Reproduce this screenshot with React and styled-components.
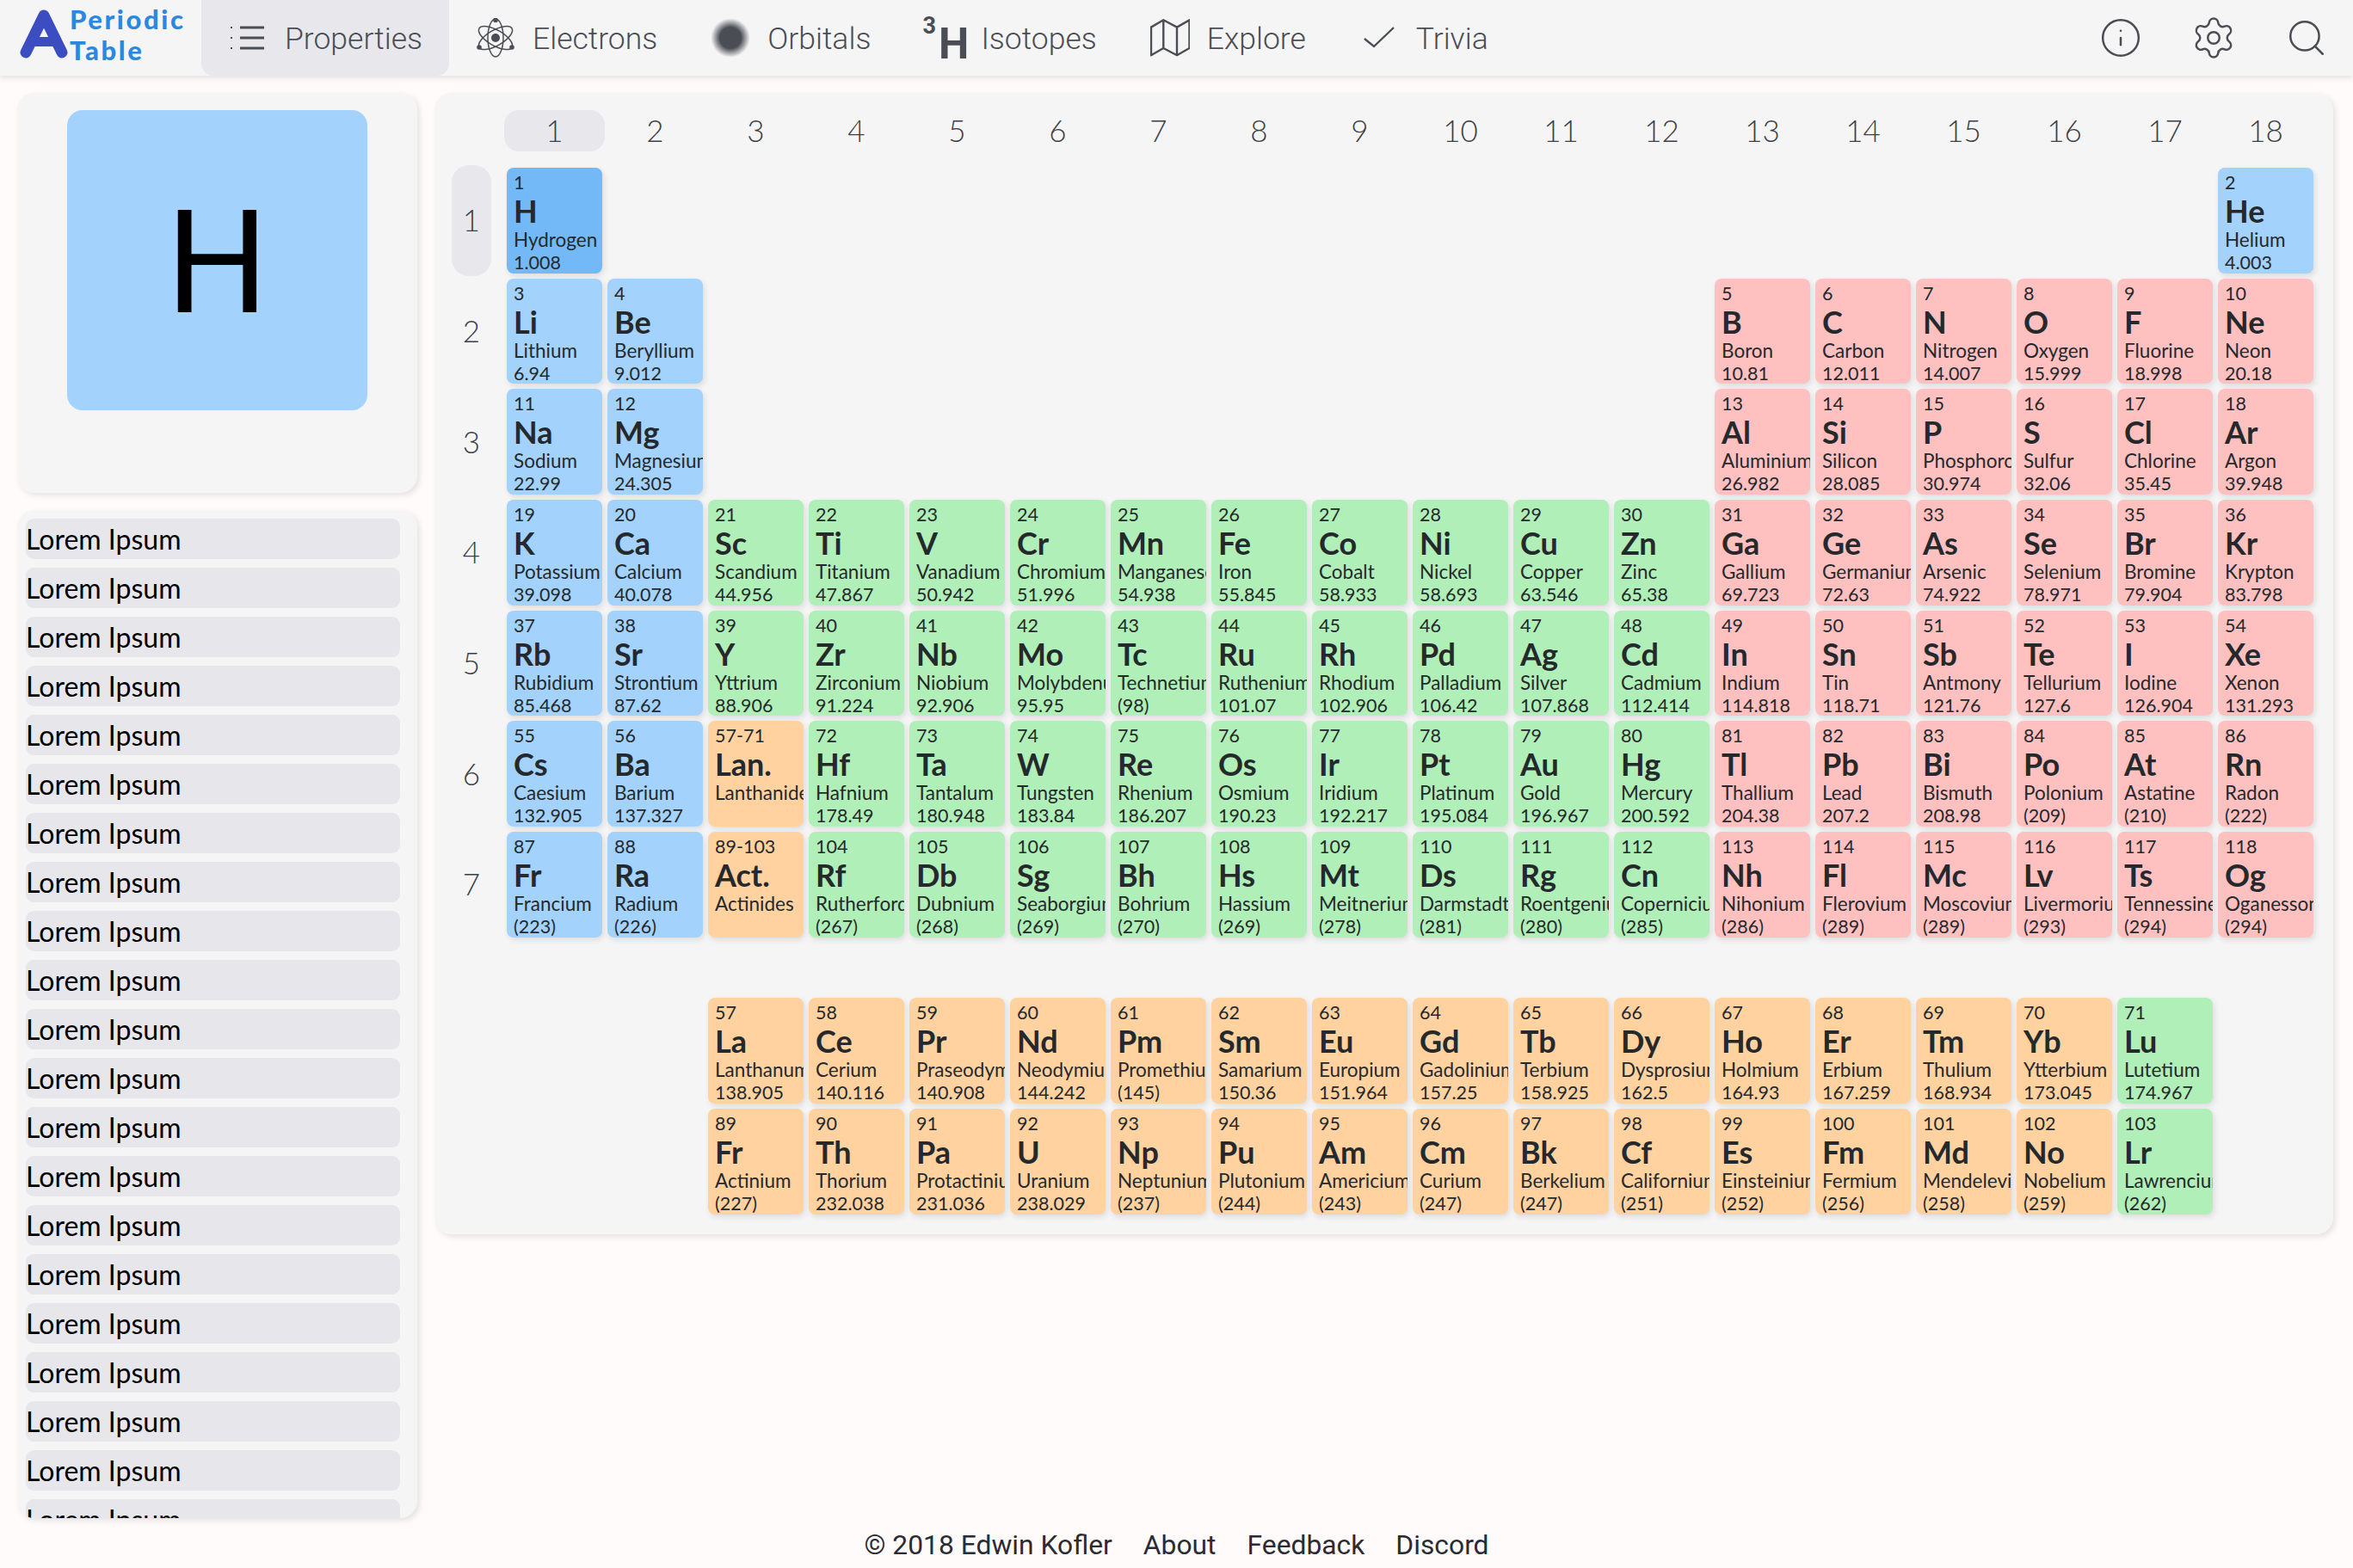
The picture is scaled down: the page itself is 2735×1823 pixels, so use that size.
import React from "react";
import styled, { createGlobalStyle } from "styled-components";
import { Info, Settings, Search } from "lucide-react";

const GlobalStyle = createGlobalStyle`
  html, body {
    margin: 0;
    padding: 0;
    background: #fffbfa;
    font-family: "Lato", "Liberation Sans", sans-serif;
  }
`;

const Page = styled.div`
  width: 2735px;
  height: 1823px;
  overflow: hidden;
  display: flex;
  flex-direction: column;
`;

/* nav */
const Nav = styled.header`
  height: 88px;
  flex: none;
  display: flex;
  align-items: stretch;
  background: #f6f5f6;
  box-shadow: 0 3px 6px rgba(60, 60, 90, 0.12);
  color: #4a4e54;
`;
const Logo = styled.div`
  width: 234px;
  flex: none;
  display: flex;
  align-items: flex-start;
  padding: 11px 0 0 23px;
  box-sizing: border-box;
  gap: 2px;
`;
const LogoText = styled.div`
  font-weight: 900;
  font-size: 31px;
  line-height: 36px;
  letter-spacing: 2.6px;
  color: #2a88e2;
  margin-top: -7px;
`;
const Tab = styled.div`
  display: flex;
  align-items: center;
  gap: 20px;
  padding: 2px 31px 0;
  font-family: "Roboto", sans-serif;
  font-weight: 300;
  font-size: 35.5px;
  border-radius: 0 0 14px 14px;
  background: ${(p) => (p.$active ? "#e8e8ec" : "transparent")};
`;
const IconBox = styled.svg`
  width: 46px;
  height: 46px;
  flex: none;
  margin-top: -2px;
  fill: none;
  stroke: #4a4e54;
  stroke-width: 2.4;
`;
const Blob = styled.div`
  width: 46px;
  height: 46px;
  flex: none;
  margin-top: -2px;
  border-radius: 50%;
  background: radial-gradient(circle, #4a4e54 38%, rgba(74, 78, 84, 0) 70%);
`;
const IsoIcon = styled.div`
  width: 46px;
  height: 46px;
  flex: none;
  display: flex;
  font-family: "Roboto", sans-serif;
  font-weight: 700;
  font-size: 50px;
  line-height: 58px;
  white-space: nowrap;
  margin-left: -2px;
  margin-right: 2px;
`;
const IsoMass = styled.span`
  font-size: 27px;
  line-height: 30px;
  margin-top: -7px;
  margin-right: 3px;
`;
const NavRight = styled.div`
  margin-left: auto;
  display: flex;
`;
const NavButton = styled.div`
  width: 108px;
  display: flex;
  align-items: center;
  justify-content: center;
`;

/* body */
const Main = styled.main`
  height: 1677px;
  flex: none;
  display: flex;
  align-items: flex-start;
  gap: 20px;
  padding: 20px 0 0 20px;
  box-sizing: border-box;
`;
const Sidebar = styled.aside`
  width: 465px;
  height: 100%;
  display: flex;
  flex-direction: column;
  gap: 20px;
`;
const Panel = styled.section`
  background: #f6f5f6;
  border-radius: 20px;
  box-shadow: 3px 3px 6px rgba(60, 60, 70, 0.12);
`;
const PreviewPanel = styled(Panel)`
  height: 465px;
  flex: none;
  padding: 20px 0 0 58px;
  box-sizing: border-box;
`;
const Preview = styled.div`
  width: 349px;
  height: 349px;
  border-radius: 18px;
  background: #a3d2fc;
  display: flex;
  align-items: center;
  justify-content: center;
  font-family: "Roboto", sans-serif;
  font-size: 167px;
  line-height: 1;
  color: #000;
  padding-top: 7px;
  box-sizing: border-box;
`;
const ListPanel = styled(Panel)`
  flex: 1;
  min-height: 0;
  overflow: hidden;
  padding: 10px 20px 0 10px;
`;
const ListItem = styled.div`
  height: 47px;
  margin-bottom: 10px;
  border-radius: 9px;
  background: #e7e7eb;
  color: #000;
  font-size: 32px;
  line-height: 47px;
`;

/* table */
const TablePanel = styled(Panel)`
  width: 2207px;
  padding: 20px;
  box-sizing: border-box;
`;
const Grid = styled.div`
  display: grid;
  grid-template-columns: 61px repeat(18, 117px);
  grid-template-rows: 64px repeat(7, 128.67px) 64px repeat(2, 129px);
`;
const GroupLabel = styled.div`
  grid-row: 1;
  grid-column: ${(p) => p.$col + 1};
  height: 48px;
  padding-bottom: 2px;
  box-sizing: border-box;
  border-radius: 17px;
  display: flex;
  align-items: center;
  justify-content: center;
  font-weight: 300;
  font-size: 35px;
  color: #3c4046;
  background: ${(p) => (p.$active ? "#e8e8ec" : "transparent")};
`;
const PeriodLabel = styled.div`
  grid-column: 1;
  grid-row: ${(p) => p.$row + 1};
  width: 46px;
  padding-bottom: 2px;
  box-sizing: border-box;
  border-radius: 20px;
  display: flex;
  align-items: center;
  justify-content: center;
  font-weight: 300;
  font-size: 35px;
  color: #3c4046;
  background: ${(p) => (p.$active ? "#e8e8ec" : "transparent")};
`;

const COLORS = {
  blue: "#a3d2fc",
  selected: "#73b9f8",
  pink: "#ffc0c0",
  green: "#b0efb7",
  orange: "#ffd2a0",
};

const Cell = styled.div`
  grid-column: ${(p) => p.$col + 1};
  grid-row: ${(p) => p.$row + 1};
  margin: 3px;
  padding: 4px 0 0 8px;
  box-sizing: border-box;
  min-width: 0;
  overflow: hidden;
  white-space: nowrap;
  border-radius: 8px;
  color: #25292c;
  background: ${(p) => COLORS[p.$kind]};
  box-shadow: 2px 3px 6px rgba(40, 40, 50, 0.12);
`;
const CellNumber = styled.div`
  font-size: 21.5px;
  line-height: 26px;
`;
const CellSymbol = styled.div`
  font-size: 36px;
  font-weight: 700;
  line-height: 40px;
`;
const CellName = styled.div`
  font-size: 22.5px;
  line-height: 28px;
`;
const CellMass = styled.div`
  font-size: 21.5px;
  line-height: 24px;
`;

/* footer */
const Footer = styled.footer`
  flex: 1;
  display: flex;
  align-items: center;
  justify-content: center;
  gap: 36px;
  font-family: "Roboto", sans-serif;
  font-size: 31.8px;
  color: #2b2b33;
  padding-top: 4px;
`;

const rows = [
  [1, "1|H|Hydrogen|1.008", [18, "2|He|Helium|4.003"]],
  [
    2,
    "3|Li|Lithium|6.94",
    "4|Be|Beryllium|9.012",
    [13, "5|B|Boron|10.81"],
    "6|C|Carbon|12.011",
    "7|N|Nitrogen|14.007",
    "8|O|Oxygen|15.999",
    "9|F|Fluorine|18.998",
    "10|Ne|Neon|20.18",
  ],
  [
    3,
    "11|Na|Sodium|22.99",
    "12|Mg|Magnesium|24.305",
    [13, "13|Al|Aluminium|26.982"],
    "14|Si|Silicon|28.085",
    "15|P|Phosphorous|30.974",
    "16|S|Sulfur|32.06",
    "17|Cl|Chlorine|35.45",
    "18|Ar|Argon|39.948",
  ],
  [
    4,
    "19|K|Potassium|39.098",
    "20|Ca|Calcium|40.078",
    "21|Sc|Scandium|44.956",
    "22|Ti|Titanium|47.867",
    "23|V|Vanadium|50.942",
    "24|Cr|Chromium|51.996",
    "25|Mn|Manganese|54.938",
    "26|Fe|Iron|55.845",
    "27|Co|Cobalt|58.933",
    "28|Ni|Nickel|58.693",
    "29|Cu|Copper|63.546",
    "30|Zn|Zinc|65.38",
    "31|Ga|Gallium|69.723",
    "32|Ge|Germanium|72.63",
    "33|As|Arsenic|74.922",
    "34|Se|Selenium|78.971",
    "35|Br|Bromine|79.904",
    "36|Kr|Krypton|83.798",
  ],
  [
    5,
    "37|Rb|Rubidium|85.468",
    "38|Sr|Strontium|87.62",
    "39|Y|Yttrium|88.906",
    "40|Zr|Zirconium|91.224",
    "41|Nb|Niobium|92.906",
    "42|Mo|Molybdenum|95.95",
    "43|Tc|Technetium|(98)",
    "44|Ru|Ruthenium|101.07",
    "45|Rh|Rhodium|102.906",
    "46|Pd|Palladium|106.42",
    "47|Ag|Silver|107.868",
    "48|Cd|Cadmium|112.414",
    "49|In|Indium|114.818",
    "50|Sn|Tin|118.71",
    "51|Sb|Antmony|121.76",
    "52|Te|Tellurium|127.6",
    "53|I|Iodine|126.904",
    "54|Xe|Xenon|131.293",
  ],
  [
    6,
    "55|Cs|Caesium|132.905",
    "56|Ba|Barium|137.327",
    "57-71|Lan.|Lanthanides|",
    "72|Hf|Hafnium|178.49",
    "73|Ta|Tantalum|180.948",
    "74|W|Tungsten|183.84",
    "75|Re|Rhenium|186.207",
    "76|Os|Osmium|190.23",
    "77|Ir|Iridium|192.217",
    "78|Pt|Platinum|195.084",
    "79|Au|Gold|196.967",
    "80|Hg|Mercury|200.592",
    "81|Tl|Thallium|204.38",
    "82|Pb|Lead|207.2",
    "83|Bi|Bismuth|208.98",
    "84|Po|Polonium|(209)",
    "85|At|Astatine|(210)",
    "86|Rn|Radon|(222)",
  ],
  [
    7,
    "87|Fr|Francium|(223)",
    "88|Ra|Radium|(226)",
    "89-103|Act.|Actinides|",
    "104|Rf|Rutherfordium|(267)",
    "105|Db|Dubnium|(268)",
    "106|Sg|Seaborgium|(269)",
    "107|Bh|Bohrium|(270)",
    "108|Hs|Hassium|(269)",
    "109|Mt|Meitnerium|(278)",
    "110|Ds|Darmstadtium|(281)",
    "111|Rg|Roentgenium|(280)",
    "112|Cn|Copernicium|(285)",
    "113|Nh|Nihonium|(286)",
    "114|Fl|Flerovium|(289)",
    "115|Mc|Moscovium|(289)",
    "116|Lv|Livermorium|(293)",
    "117|Ts|Tennessine|(294)",
    "118|Og|Oganesson|(294)",
  ],
  [
    9,
    [3, "57|La|Lanthanum|138.905"],
    "58|Ce|Cerium|140.116",
    "59|Pr|Praseodymium|140.908",
    "60|Nd|Neodymium|144.242",
    "61|Pm|Promethium|(145)",
    "62|Sm|Samarium|150.36",
    "63|Eu|Europium|151.964",
    "64|Gd|Gadolinium|157.25",
    "65|Tb|Terbium|158.925",
    "66|Dy|Dysprosium|162.5",
    "67|Ho|Holmium|164.93",
    "68|Er|Erbium|167.259",
    "69|Tm|Thulium|168.934",
    "70|Yb|Ytterbium|173.045",
    "71|Lu|Lutetium|174.967",
  ],
  [
    10,
    [3, "89|Fr|Actinium|(227)"],
    "90|Th|Thorium|232.038",
    "91|Pa|Protactinium|231.036",
    "92|U|Uranium|238.029",
    "93|Np|Neptunium|(237)",
    "94|Pu|Plutonium|(244)",
    "95|Am|Americium|(243)",
    "96|Cm|Curium|(247)",
    "97|Bk|Berkelium|(247)",
    "98|Cf|Californium|(251)",
    "99|Es|Einsteinium|(252)",
    "100|Fm|Fermium|(256)",
    "101|Md|Mendelevium|(258)",
    "102|No|Nobelium|(259)",
    "103|Lr|Lawrencium|(262)",
  ],
];

function kindOf(num, row, col) {
  if (num === "1") return "selected";
  if (num === "2") return "blue";
  if (row >= 9) return col === 17 ? "green" : "orange";
  if (num.includes("-")) return "orange";
  if (col <= 2) return "blue";
  return col <= 12 ? "green" : "pink";
}

const elements = rows.flatMap(([row, ...items]) => {
  let col = 0;
  return items.map((item) => {
    let text = item;
    if (Array.isArray(item)) {
      col = item[0];
      text = item[1];
    } else {
      col += 1;
    }
    const [num, sym, name, mass] = text.split("|");
    return { num, sym, name, mass, col, row, kind: kindOf(num, row, col) };
  });
});

function LogoMark() {
  return (
    <svg width="56" height="58" viewBox="0 0 56 58" fill="none" stroke="#3c4dc2">
      <path d="M7 50 L28 7 L49 50" strokeWidth="13" strokeLinecap="round" strokeLinejoin="round" />
      <path d="M14 37.5 H42" strokeWidth="11" />
    </svg>
  );
}

function ListIcon() {
  return (
    <IconBox viewBox="0 0 46 46">
      <path d="M14 11 H42 M14 23 H42 M14 35 H42" strokeWidth="3" />
      <path d="M3 11 H5 M3 23 H5 M3 35 H5" strokeWidth="2" />
    </IconBox>
  );
}

const AtomBox = styled(IconBox)`
  stroke-width: 1.5;
`;

function AtomIcon() {
  return (
    <AtomBox viewBox="0 0 46 46">
      <ellipse cx="23" cy="23" rx="9" ry="22" />
      <ellipse cx="23" cy="23" rx="9" ry="22" transform="rotate(60 23 23)" />
      <ellipse cx="23" cy="23" rx="9" ry="22" transform="rotate(120 23 23)" />
      <g fill="#4a4e54" stroke="none">
        <circle cx="23" cy="23" r="5" />
        <circle cx="23" cy="2.5" r="2.8" />
        <circle cx="4" cy="34" r="2.8" />
        <circle cx="42" cy="34" r="2.8" />
      </g>
    </AtomBox>
  );
}

function MapIcon() {
  return (
    <IconBox viewBox="0 0 46 46">
      <path d="M1 10.6 L15.3 2.3 L31 10.6 L45.5 2.3 V35 L31 43.3 L15.3 35 L1 43.3 Z M15.3 2.3 V35 M31 10.6 V43.3" strokeLinejoin="round" />
    </IconBox>
  );
}

function CheckIcon() {
  return (
    <IconBox viewBox="0 0 46 46">
      <path d="M6 24 L17 33 L40 11" />
    </IconBox>
  );
}

const tabs = [
  { label: "Properties", icon: <ListIcon />, active: true },
  { label: "Electrons", icon: <AtomIcon /> },
  { label: "Orbitals", icon: <Blob /> },
  {
    label: "Isotopes",
    icon: (
      <IsoIcon>
        <IsoMass>3</IsoMass>H
      </IsoIcon>
    ),
  },
  { label: "Explore", icon: <MapIcon /> },
  { label: "Trivia", icon: <CheckIcon /> },
];

export default function App() {
  return (
    <Page>
      <GlobalStyle />
      <Nav>
        <Logo>
          <LogoMark />
          <LogoText>
            Periodic
            <br />
            Table
          </LogoText>
        </Logo>
        {tabs.map((t) => (
          <Tab key={t.label} $active={t.active}>
            {t.icon}
            {t.label}
          </Tab>
        ))}
        <NavRight>
          <NavButton>
            <Info size={50} strokeWidth={1.2} />
          </NavButton>
          <NavButton>
            <Settings size={54} strokeWidth={1.1} />
          </NavButton>
          <NavButton>
            <Search size={50} strokeWidth={1.2} />
          </NavButton>
        </NavRight>
      </Nav>
      <Main>
        <Sidebar>
          <PreviewPanel>
            <Preview>H</Preview>
          </PreviewPanel>
          <ListPanel>
            {Array.from({ length: 22 }, (_, i) => (
              <ListItem key={i}>Lorem Ipsum</ListItem>
            ))}
          </ListPanel>
        </Sidebar>
        <TablePanel>
          <Grid>
            {Array.from({ length: 18 }, (_, i) => (
              <GroupLabel key={i} $col={i + 1} $active={i === 0}>
                {i + 1}
              </GroupLabel>
            ))}
            {Array.from({ length: 7 }, (_, i) => (
              <PeriodLabel key={i} $row={i + 1} $active={i === 0}>
                {i + 1}
              </PeriodLabel>
            ))}
            {elements.map((el) => (
              <Cell key={el.num + el.name} $col={el.col} $row={el.row} $kind={el.kind}>
                <CellNumber>{el.num}</CellNumber>
                <CellSymbol>{el.sym}</CellSymbol>
                <CellName>{el.name}</CellName>
                <CellMass>{el.mass}</CellMass>
              </Cell>
            ))}
          </Grid>
        </TablePanel>
      </Main>
      <Footer>
        <span>© 2018 Edwin Kofler</span>
        <span>About</span>
        <span>Feedback</span>
        <span>Discord</span>
      </Footer>
    </Page>
  );
}
